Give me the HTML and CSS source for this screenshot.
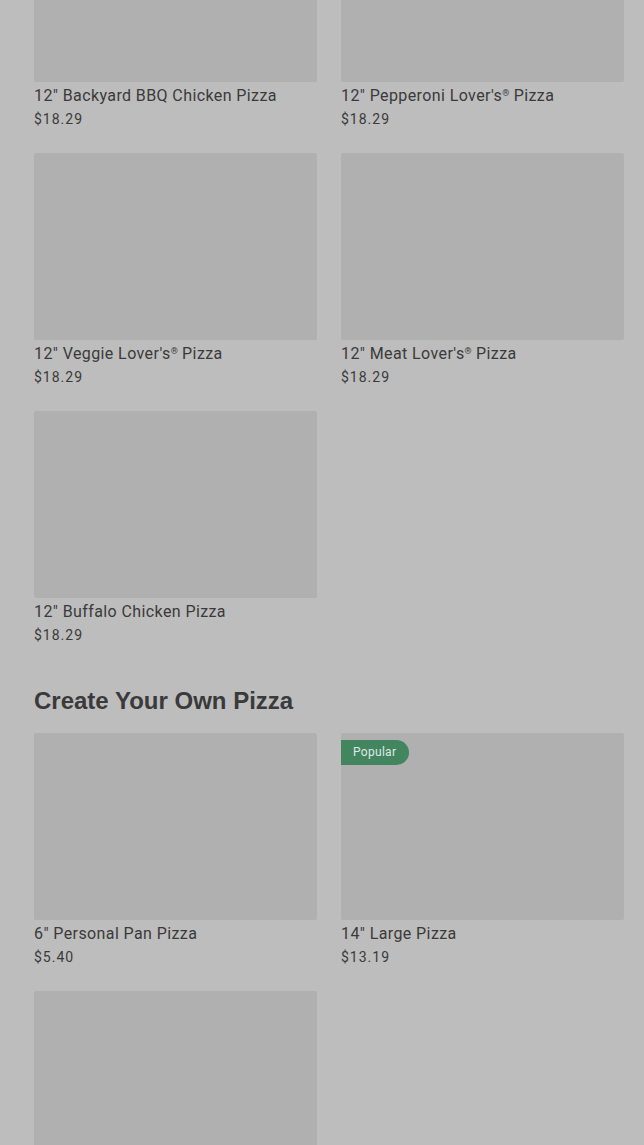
FILE: index.html
```html
<!DOCTYPE html>
<html lang="en">
<head>
    <meta charset="UTF-8">
    <meta name="viewport" content="width=device-width, initial-scale=1.0">
    <title>Pizza Menu</title>
    <link rel="stylesheet" href="styles.css">
</head>
<body>
    <div class="menu">
        <div class="grid">
            <div class="card">
                <div class="card-img"></div>
                <p class="card-name">12" Backyard BBQ Chicken Pizza</p>
                <p class="card-price">$18.29</p>
            </div>
            <div class="card">
                <div class="card-img"></div>
                <p class="card-name">12" Pepperoni Lover's<span class="reg">®</span> Pizza</p>
                <p class="card-price">$18.29</p>
            </div>
            <div class="card">
                <div class="card-img"></div>
                <p class="card-name">12" Veggie Lover's<span class="reg">®</span> Pizza</p>
                <p class="card-price">$18.29</p>
            </div>
            <div class="card">
                <div class="card-img"></div>
                <p class="card-name">12" Meat Lover's<span class="reg">®</span> Pizza</p>
                <p class="card-price">$18.29</p>
            </div>
            <div class="card">
                <div class="card-img"></div>
                <p class="card-name">12" Buffalo Chicken Pizza</p>
                <p class="card-price">$18.29</p>
            </div>
        </div>

        <h2 class="section-title">Create Your Own Pizza</h2>

        <div class="grid">
            <div class="card">
                <div class="card-img"></div>
                <p class="card-name">6" Personal Pan Pizza</p>
                <p class="card-price">$5.40</p>
            </div>
            <div class="card">
                <div class="card-img">
                    <span class="badge">Popular</span>
                </div>
                <p class="card-name">14" Large Pizza</p>
                <p class="card-price">$13.19</p>
            </div>
            <div class="card">
                <div class="card-img"></div>
                <p class="card-name">&nbsp;</p>
                <p class="card-price">&nbsp;</p>
            </div>
        </div>
    </div>
</body>
</html>
```

FILE: styles.css
```css
body {
    margin: 0;
    padding: 0;
    background-color: #bdbdbd;
    font-family: Roboto, "Noto Sans", sans-serif;
    color: #3a3a3a;
}

/* page is shown scrolled part way down the list */
.menu {
    margin-top: -105px;
    padding: 0 20px 0 34px;
}

.grid {
    display: grid;
    grid-template-columns: 1fr 1fr;
    column-gap: 24px;
}

.card {
    margin-bottom: 23px;
}

.card-img {
    position: relative;
    height: 187px;
    background-color: #b0b0b0;
    border-radius: 2px;
}

.badge {
    position: absolute;
    top: 7px;
    left: 0;
    height: 25px;
    line-height: 25px;
    padding: 0 13px 0 12px;
    background-color: #42855f;
    color: #dfeae3;
    font-size: 12px;
    letter-spacing: 0.3px;
    border-radius: 0 13px 13px 0;
}

.card-name {
    margin: 2px 0 0;
    font-size: 16px;
    line-height: 24px;
    letter-spacing: 0.4px;
}

.reg {
    font-size: 9px;
    line-height: 0;
    vertical-align: 5px;
    letter-spacing: 0;
}

.card-price {
    margin: 0;
    font-size: 14px;
    line-height: 22px;
    letter-spacing: 1px;
}

.section-title {
    margin: 16px 0 16px;
    font-family: "Liberation Sans", Arial, sans-serif;
    font-size: 24px;
    font-weight: bold;
    line-height: 32px;
}
```
